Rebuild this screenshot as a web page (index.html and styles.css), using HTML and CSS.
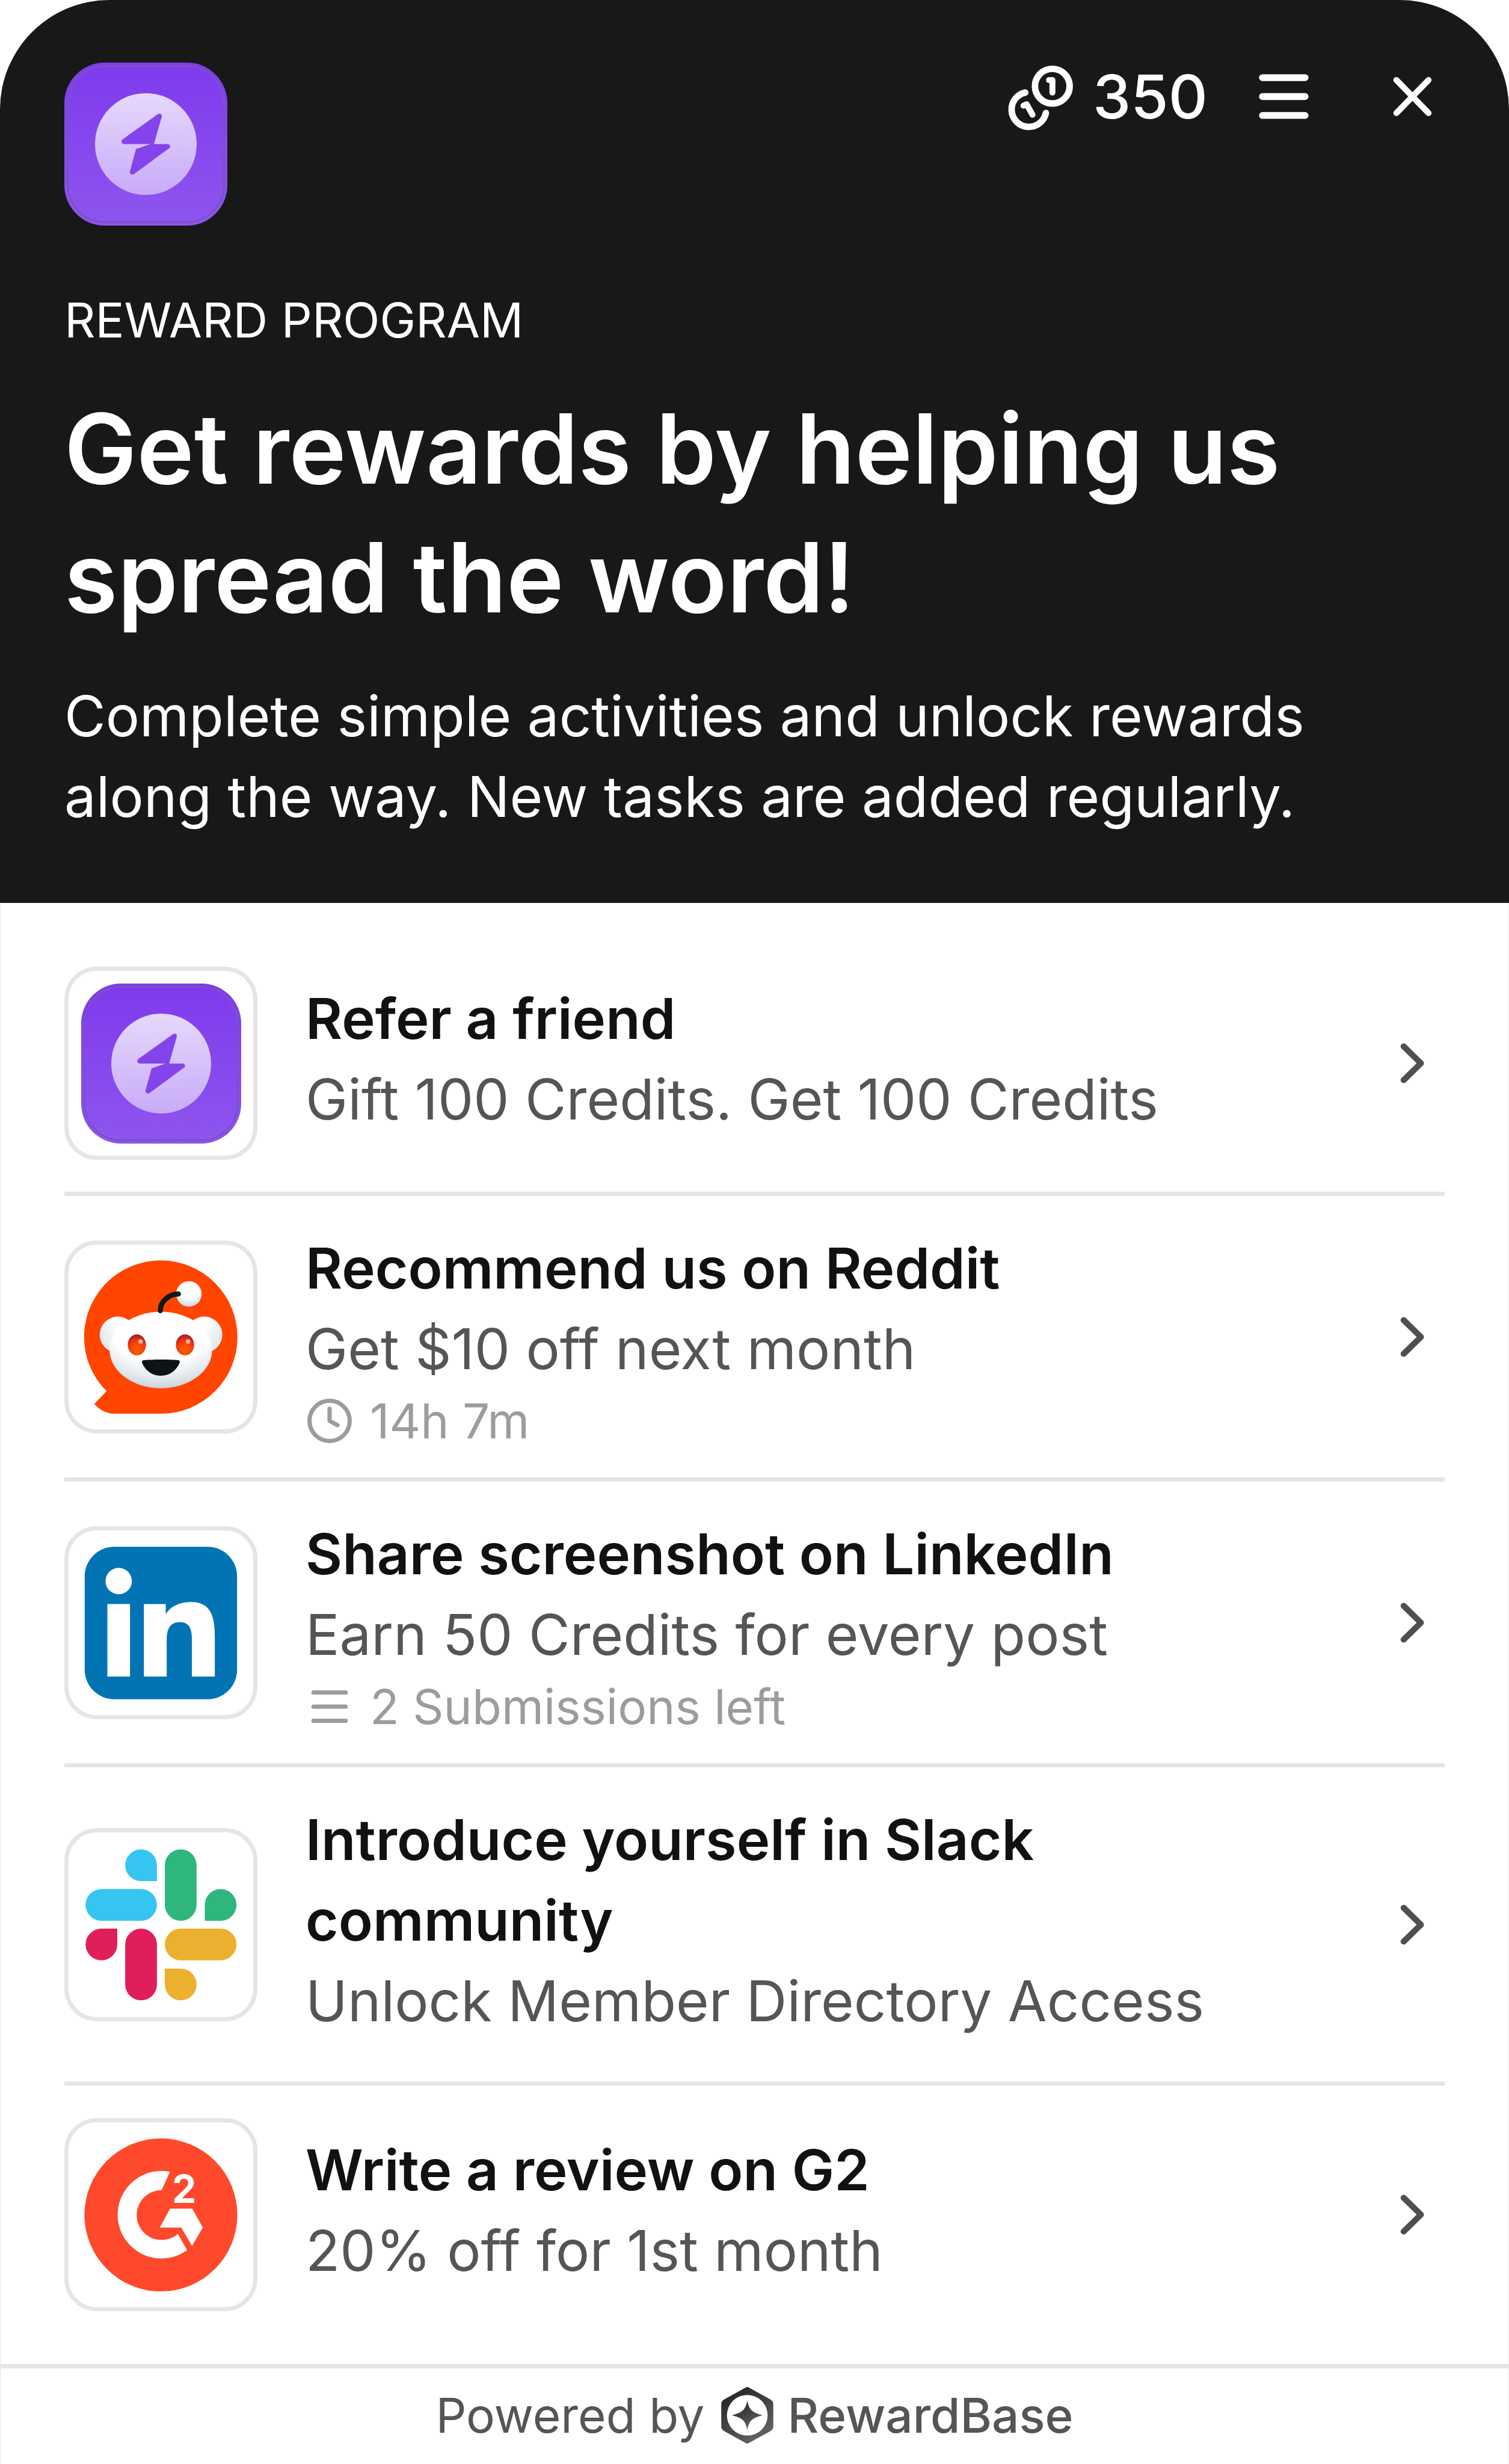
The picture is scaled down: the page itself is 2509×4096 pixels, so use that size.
FILE: index.html
```html
<!DOCTYPE html>
<html lang="en">

<head>
  <meta charset="UTF-8">
  <meta name="viewport" content="width=device-width, initial-scale=1.0">
  <title>Reward Program</title>
  <link rel="stylesheet" href="styles.css">
</head>

<body>
  <!-- Shared icons -->
  <svg class="sprite" aria-hidden="true">
    <defs>
      <linearGradient id="tile-fill" x1="0" y1="0" x2="0" y2="1">
        <stop offset="0" stop-color="#7e3aed"/>
        <stop offset="1" stop-color="#8e55ee"/>
      </linearGradient>
      <linearGradient id="disc-fill" x1="0" y1="0" x2="0" y2="1">
        <stop offset="0" stop-color="#e6d8fc"/>
        <stop offset="1" stop-color="#c8abf8"/>
      </linearGradient>
    </defs>
    <symbol id="icon-bolt" viewBox="30 30 282 282">
      <rect x="30" y="30" width="282" height="282" rx="70" fill="url(#tile-fill)"/>
      <rect x="36" y="36" width="270" height="270" rx="64" fill="none" stroke="#7a52c4" stroke-width="3"/>
      <circle cx="171" cy="171" r="88" fill="url(#disc-fill)"/>
      <path d="M191.7 119.3C195 117 199.5 119 198.5 124L185 171H208C213 171 214.5 175.5 211.5 178L150.6 222.7C147 225 142.5 223 143.5 218L154 179.5L179 171H134C129 171 127.5 166.5 130.5 163Z" fill="#8344eb"/>
    </symbol>
    <symbol id="icon-chevron" viewBox="0 0 16 16">
      <path d="M5.8 3.8L10.1 8L5.8 12.2" fill="none" stroke="#4f4f4f" stroke-width="1.5" stroke-linecap="round" stroke-linejoin="round"/>
    </symbol>
  </svg>

  <main class="widget">
    <header class="header">
      <div class="header-top">
        <svg class="logo" aria-hidden="true"><use href="#icon-bolt"/></svg>
        <div class="header-actions">
          <div class="credits">
            <svg class="credits-icon" viewBox="0 0 127 127" fill="none" stroke="#fff" stroke-linecap="round" stroke-linejoin="round" aria-hidden="true">
              <circle cx="84.3" cy="44.7" r="30.5" stroke-width="11.5"/>
              <path d="M36.7 56A30.5 30.5 0 1 0 73 92" stroke-width="11.5"/>
              <path d="M78.5 34H84.5V56M33.5 79L39 76.5L49.5 95" stroke-width="10.5"/>
            </svg>
            <span>350</span>
          </div>
          <button class="icon-button" type="button" aria-label="Menu">
            <svg viewBox="0 0 16 16" fill="none" stroke="#fff" stroke-width="1.7" stroke-linecap="round">
              <path d="M2.7 3.3H13.3M2.7 8H13.3M2.7 12.7H13.3"/>
            </svg>
          </button>
          <button class="icon-button" type="button" aria-label="Close">
            <svg viewBox="0 0 16 16" fill="none" stroke="#fff" stroke-width="1.5" stroke-linecap="round">
              <path d="M4 3.9L12 12.1M12 3.9L4 12.1"/>
            </svg>
          </button>
        </div>
      </div>
      <p class="eyebrow">REWARD PROGRAM</p>
      <h1 class="title">Get rewards by helping us spread the word!</h1>
      <p class="description">Complete simple activities and unlock rewards along the way. New tasks are added regularly.</p>
    </header>

    <nav class="activity-list" aria-label="Activities">
      <a class="activity" href="#refer">
        <span class="tile">
          <svg class="tile-bolt" aria-hidden="true"><use href="#icon-bolt"/></svg>
        </span>
        <span class="activity-text">
          <span class="activity-title">Refer a friend</span>
          <span class="activity-reward">Gift 100 Credits. Get 100 Credits</span>
        </span>
        <svg class="chevron" aria-hidden="true"><use href="#icon-chevron"/></svg>
      </a>

      <a class="activity" href="#reddit">
        <span class="tile">
          <svg class="tile-icon" viewBox="7 7 326 326" aria-hidden="true">
            <defs>
              <radialGradient id="snoo-head" cx="0.5" cy="0.2" r="0.85">
                <stop offset="0.55" stop-color="#fff"/>
                <stop offset="0.8" stop-color="#e3e8ed"/>
                <stop offset="1" stop-color="#bfcad3"/>
              </radialGradient>
              <radialGradient id="snoo-ear" gradientUnits="userSpaceOnUse" cx="170" cy="120" r="120">
                <stop offset="0.7" stop-color="#fff"/>
                <stop offset="1" stop-color="#e3e8ed"/>
              </radialGradient>
              <radialGradient id="snoo-eye" cx="0.5" cy="0.75" r="0.75">
                <stop offset="0" stop-color="#ff6000"/>
                <stop offset="0.6" stop-color="#f03a0c"/>
                <stop offset="1" stop-color="#a01c2c"/>
              </radialGradient>
            </defs>
            <path d="M170 35A135 135 0 0 1 170 305.5H89C75 305.5 62 299 52.4 288.3L74.2 265.7A135 135 0 0 1 170 35Z" fill="#ff4500"/>
            <circle cx="94" cy="166" r="32" fill="url(#snoo-ear)"/>
            <circle cx="246.5" cy="166" r="32" fill="url(#snoo-ear)"/>
            <circle cx="219.5" cy="94" r="22.5" fill="url(#snoo-head)"/>
            <ellipse cx="170" cy="193" rx="90.5" ry="67.5" fill="url(#snoo-head)"/>
            <path d="M169 123.5C169 108 183 94 201 94" fill="none" stroke="#10191c" stroke-width="9" stroke-linecap="round"/>
            <ellipse cx="127.6" cy="184" rx="16" ry="18.5" fill="url(#snoo-eye)"/>
            <ellipse cx="212.6" cy="184" rx="16" ry="18.5" fill="url(#snoo-eye)"/>
            <circle cx="134" cy="178" r="4" fill="#ffb59a"/>
            <circle cx="218" cy="178" r="4" fill="#ffb59a"/>
            <path d="M140 211C155 209.5 186 209.5 200 211C203 211 204 213 203 216C197 230 185 238.5 170 238.5C155 238.5 143 230 137 216C136 213 137 211 140 211Z" fill="#0c1416"/>
          </svg>
        </span>
        <span class="activity-text">
          <span class="activity-title">Recommend us on Reddit</span>
          <span class="activity-reward">Get $10 off next month</span>
          <span class="activity-meta">
            <svg viewBox="0 0 85 85" fill="none" stroke="#9c9c9c" stroke-width="7.5" stroke-linecap="round" stroke-linejoin="round" aria-hidden="true">
              <circle cx="42.5" cy="42.5" r="35.5"/>
              <path d="M42.5 21V42.5L56.5 50"/>
            </svg>
            14h 7m
          </span>
        </span>
        <svg class="chevron" aria-hidden="true"><use href="#icon-chevron"/></svg>
      </a>

      <a class="activity" href="#linkedin">
        <span class="tile">
          <svg class="tile-icon" viewBox="7 7 326 326" aria-hidden="true">
            <rect x="35.5" y="36" width="269" height="269" rx="52" fill="#0274b3"/>
            <g fill="#fff">
              <circle cx="95.5" cy="96.5" r="23.3"/>
              <rect x="75.5" y="137" width="40" height="128"/>
              <path d="M140 137H178.6V155C186 142 202 133.3 223 133.3C258 133.3 265.2 158 265.2 195V265H224.8V203C224.8 188 224.5 169 203.5 169C183 169 180.3 186 180.3 202V265H140Z"/>
            </g>
          </svg>
        </span>
        <span class="activity-text">
          <span class="activity-title">Share screenshot on LinkedIn</span>
          <span class="activity-reward">Earn 50 Credits for every post</span>
          <span class="activity-meta">
            <svg viewBox="0 0 85 85" fill="none" stroke="#9c9c9c" stroke-width="7.5" stroke-linecap="round" aria-hidden="true">
              <path d="M14 17.5H71M14 42.5H71M14 67.5H71"/>
            </svg>
            2 Submissions left
          </span>
        </span>
        <svg class="chevron" aria-hidden="true"><use href="#icon-chevron"/></svg>
      </a>

      <a class="activity" href="#slack">
        <span class="tile">
          <svg class="tile-icon" viewBox="7 7 326 326" aria-hidden="true">
            <g fill="#36c5f0">
              <path d="M163 93H135A28 28 0 1 1 163 65Z"/>
              <rect x="37" y="107" width="126" height="56" rx="28"/>
            </g>
            <g fill="#2eb67d">
              <rect x="177" y="37" width="56" height="126" rx="28"/>
              <path d="M247.5 163V135A28 28 0 1 1 275.5 163Z"/>
            </g>
            <g fill="#e01e5a">
              <path d="M93 177V205A28 28 0 1 1 65 177Z"/>
              <rect x="107" y="177" width="56" height="126.5" rx="28"/>
            </g>
            <g fill="#ebb12e">
              <rect x="177" y="177" width="126.5" height="56" rx="28"/>
              <path d="M177 247.5H205A28 28 0 1 1 177 275.5Z"/>
            </g>
          </svg>
        </span>
        <span class="activity-text">
          <span class="activity-title">Introduce yourself in Slack community</span>
          <span class="activity-reward">Unlock Member Directory Access</span>
        </span>
        <svg class="chevron" aria-hidden="true"><use href="#icon-chevron"/></svg>
      </a>

      <a class="activity" href="#g2">
        <span class="tile">
          <svg class="tile-icon" viewBox="7 7 326 326" aria-hidden="true">
            <circle cx="170" cy="170.5" r="135" fill="#ff492c"/>
            <g fill="#fff">
              <path d="M186 94.3A77.3 77.3 0 1 0 216.3 232.7L200 204A44 44 0 1 1 171.3 126.7Z"/>
              <path d="M186.3 159.3H225.3L244 192.7L225 225.3L206 192.7H168Z"/>
              <text class="g2-number" x="211" y="149" text-anchor="middle">2</text>
            </g>
          </svg>
        </span>
        <span class="activity-text">
          <span class="activity-title">Write a review on G2</span>
          <span class="activity-reward">20% off for 1st month</span>
        </span>
        <svg class="chevron" aria-hidden="true"><use href="#icon-chevron"/></svg>
      </a>
    </nav>

    <footer class="footer">
      <span>Powered by</span>
      <a class="brand" href="#rewardbase">
        <svg class="brand-icon" viewBox="0 0 92 100" aria-hidden="true">
          <defs>
            <linearGradient id="brand-fill" x1="0" y1="0" x2="0.6" y2="1">
              <stop offset="0" stop-color="#1c1c1c"/>
              <stop offset="1" stop-color="#626262"/>
            </linearGradient>
          </defs>
          <path fill="url(#brand-fill)" fill-rule="evenodd" d="M43 1Q46 -1 49 1L87 22Q92 25 92 30V70Q92 75 87 78L49 99Q46 101 43 99L5 78Q0 75 0 70V30Q0 25 5 22ZM46 14A36 36 0 1 0 46 86A36 36 0 1 0 46 14Z"/>
          <path fill="url(#brand-fill)" d="M46 24C49 40 54 45 73 50C54 55 49 60 46 76C43 60 38 55 19 50C38 45 43 40 46 24Z"/>
        </svg>
        RewardBase
      </a>
    </footer>
  </main>
</body>

</html>
```
FILE: styles.css
```css
* {
  box-sizing: border-box;
}

body {
  margin: 0;
  background: #fff;
  font-family: Inter, "Liberation Sans", sans-serif;
  font-optical-sizing: none;
  font-size: 94px;
  line-height: 134px;
  color: #111;
}

a {
  color: inherit;
  text-decoration: none;
}

svg {
  display: block;
  flex: none;
}

.sprite {
  position: absolute;
  width: 0;
  height: 0;
}

.widget {
  background: #fff;
  border-radius: 182px 182px 0 0;
  box-shadow: inset 0 0 0 1px #e5e5e5;
  overflow: hidden;
}

/* Header */
.header {
  padding: 104px 107px 110px;
  background: #181818;
  color: #fff;
}

.header-top {
  display: flex;
  align-items: flex-start;
  justify-content: space-between;
}

.logo {
  width: 271px;
  height: 271px;
}

.header-actions {
  display: flex;
  align-items: center;
  gap: 107px;
  height: 113px;
}

.credits {
  display: flex;
  align-items: center;
  gap: 27px;
  margin-right: -34px;
  font-size: 101px;
  font-weight: 500;
  line-height: 107px;
}

.credits-icon {
  width: 120px;
  height: 120px;
}

.icon-button {
  width: 107px;
  height: 107px;
  padding: 0;
  border: none;
  background: none;
  cursor: pointer;
}

.icon-button svg {
  width: 100%;
  height: 100%;
}

.eyebrow {
  margin: 103px 0 0;
  font-size: 80px;
  line-height: 107px;
}

.title {
  margin: 54px 0 0;
  font-size: 161px;
  font-weight: 600;
  line-height: 214px;
}

.description {
  margin: 56px 0 0;
}

/* Activities */
.activity-list {
  padding: 52px 107px 35px;
}

.activity {
  display: flex;
  align-items: center;
  gap: 80px;
  padding: 54px 0 53px;
  border-bottom: 7px solid #e5e5e5;
}

.activity:last-child {
  border-bottom: none;
}

.tile {
  display: flex;
  flex: none;
  align-items: center;
  justify-content: center;
  width: 321px;
  height: 321px;
  border: 7px solid #e5e5e5;
  border-radius: 54px;
}

.tile-icon {
  width: 307px;
  height: 307px;
}

.tile-bolt {
  width: 266px;
  height: 266px;
}

.g2-number {
  font-size: 68px;
  font-weight: 700;
}

.activity-text {
  display: flex;
  flex: 1;
  flex-direction: column;
  margin: -1px 0 1px;
}

.activity-title {
  font-weight: 600;
}

.activity-reward {
  margin-bottom: 13px;
  color: #555;
}

.activity-meta {
  display: flex;
  align-items: center;
  gap: 27px;
  font-size: 80px;
  line-height: 80px;
  color: #9c9c9c;
}

.activity-meta svg {
  width: 80px;
  height: 80px;
}

.chevron {
  width: 107px;
  height: 107px;
}

/* Footer */
.footer {
  display: flex;
  align-items: center;
  justify-content: center;
  gap: 27px;
  padding-bottom: 4px;
  border-top: 7px solid #e5e5e5;
  font-size: 80px;
  line-height: 156px;
  color: #555;
}

.brand {
  display: flex;
  align-items: center;
  gap: 24px;
  font-weight: 500;
}

.brand-icon {
  width: 87px;
  height: 94px;
}
```
